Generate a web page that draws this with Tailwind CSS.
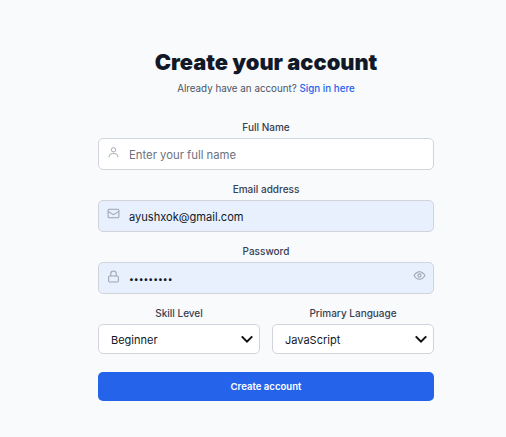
<!doctype html>
<html><head><meta charset="utf-8"><script src="https://cdn.jsdelivr.net/npm/@tailwindcss/browser@4"></script></head>
<body class="bg-[#f9fafc] h-[437px] overflow-hidden font-['Inter',sans-serif]">
<main class="w-[336px] ml-[98px] pt-[47px]">
<h1 class="text-center text-[21.8px] leading-[30px] font-black text-[#111827]">Create your account</h1>
<p class="mt-[2px] h-[20px] text-center text-[9.8px] leading-[20px] text-[#4b5563]">Already have an account? <a class="text-[#2563eb] font-medium">Sign in here</a></p>
<form class="mt-[21px] flex flex-col gap-[12px]">
<div><div class="text-center text-[10px] leading-[14px] font-medium text-[#374151] mb-[4px]">Full Name</div>
<div class="h-[32px] rounded-[5px] border border-[#d1d5db] bg-white flex items-center pl-[8px] pr-[14px]">
<svg class="w-[13px] h-[13px] -translate-y-[2px] text-[#9ca3af]" fill="none" viewBox="0 0 24 24" stroke="currentColor" stroke-width="1.7"><circle cx="12" cy="7" r="4"/><path d="M4 21v-2a6 6 0 0 1 6-5h4a6 6 0 0 1 6 5v2"/></svg>
<span class="ml-[9px] pt-[3px] text-[11.3px] text-[#6b7280]">Enter your full name</span></div></div>
<div><div class="text-center text-[10px] leading-[14px] font-medium text-[#374151] mb-[4px]">Email address</div>
<div class="h-[32px] rounded-[5px] border border-[#d1d5db] bg-[#e8f0fe] flex items-center pl-[8px] pr-[14px]">
<svg class="w-[13px] h-[13px] -translate-y-[3px] text-[#9ca3af]" fill="none" viewBox="0 0 24 24" stroke="currentColor" stroke-width="1.9"><rect x="2" y="4" width="20" height="16" rx="2"/><path d="M2 8l10 6 10-6"/></svg>
<span class="ml-[9px] pt-[3px] text-[11.1px] text-[#111827]">ayushxok@gmail.com</span></div></div>
<div><div class="text-center text-[10px] leading-[14px] font-medium text-[#374151] mb-[4px]">Password</div>
<div class="h-[32px] rounded-[5px] border border-[#d1d5db] bg-[#e8f0fe] flex items-center pl-[8px] pr-[8px]">
<svg class="w-[13px] h-[13px] -translate-y-[2px] text-[#9ca3af]" fill="none" viewBox="0 0 24 24" stroke="currentColor" stroke-width="1.9"><rect x="3" y="11" width="18" height="11" rx="2"/><path d="M7 11V7a5 5 0 0 1 10 0v4"/></svg>
<span class="ml-[9px] pt-[2px] text-[8.6px] text-[#111827] flex-1">•••••••••</span>
<svg class="w-[13px] h-[13px] -translate-y-[3px] translate-x-[1px] text-[#9ca3af]" fill="none" viewBox="0 0 24 24" stroke="currentColor" stroke-width="1.9"><path d="M2 12s4-7 10-7 10 7 10 7-4 7-10 7-10-7-10-7z"/><circle cx="12" cy="12" r="3"/></svg></div></div>
<div class="grid grid-cols-2 gap-[12px]">
<div><div class="text-center text-[10px] leading-[14px] font-medium text-[#374151] mb-[4px]">Skill Level</div>
<div class="h-[30px] rounded-[5px] border border-[#d1d5db] bg-white flex items-center justify-between pl-[12px] pr-[5px] text-[11px] text-[#111827]"><span class="pt-[3px]">Beginner</span><svg class="w-[14px] h-[14px]" fill="none" viewBox="0 0 16 16" stroke="#111" stroke-width="2.4"><path d="M2 5l6 6 6-6"/></svg></div></div>
<div><div class="text-center text-[10px] leading-[14px] font-medium text-[#374151] mb-[4px]">Primary Language</div>
<div class="h-[30px] rounded-[5px] border border-[#d1d5db] bg-white flex items-center justify-between pl-[12px] pr-[5px] text-[11px] text-[#111827]"><span class="pt-[3px]">JavaScript</span><svg class="w-[14px] h-[14px]" fill="none" viewBox="0 0 16 16" stroke="#111" stroke-width="2.4"><path d="M2 5l6 6 6-6"/></svg></div></div>
</div>
<button type="button" class="mt-[6px] h-[29px] pt-[1px] rounded-[5px] bg-[#2563eb] text-white text-[9.6px] font-semibold">Create account</button>
</form></main></body></html>
